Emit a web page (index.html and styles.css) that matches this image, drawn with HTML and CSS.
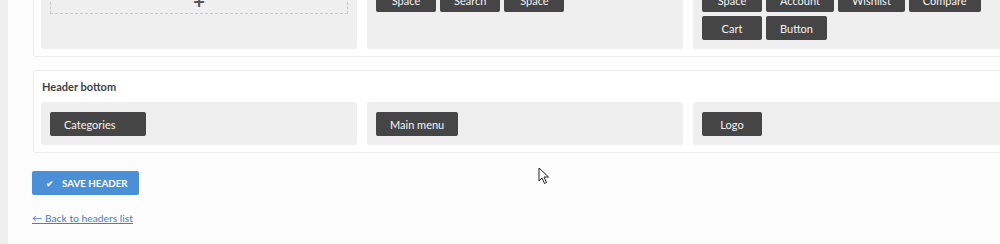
FILE: index.html
```html
<!DOCTYPE html>
<html lang="en">
<head>
    <meta charset="UTF-8">
    <meta name="viewport" content="width=device-width, initial-scale=1.0">
    <title>Header builder</title>
    <link rel="stylesheet" href="styles.css">
</head>
<body>
    <div class="sidebar"></div>
    <div class="content">
        <div class="builder">
            <div class="section section-top">
                <div class="section-title">Header main</div>
                <div class="columns">
                    <div class="column">
                        <div class="dropzone"><span class="plus">+</span></div>
                    </div>
                    <div class="column">
                        <div class="row">
                            <span class="element">Space</span>
                            <span class="element">Search</span>
                            <span class="element">Space</span>
                        </div>
                    </div>
                    <div class="column">
                        <div class="row">
                            <span class="element">Space</span>
                            <span class="element">Account</span>
                            <span class="element">Wishlist</span>
                            <span class="element">Compare</span>
                        </div>
                        <div class="row">
                            <span class="element">Cart</span>
                            <span class="element">Button</span>
                        </div>
                    </div>
                </div>
            </div>

            <div class="section">
                <div class="section-title">Header bottom</div>
                <div class="columns">
                    <div class="column">
                        <div class="row">
                            <span class="element element-wide">Categories</span>
                        </div>
                    </div>
                    <div class="column">
                        <div class="row">
                            <span class="element">Main menu</span>
                        </div>
                    </div>
                    <div class="column">
                        <div class="row">
                            <span class="element">Logo</span>
                        </div>
                    </div>
                </div>
            </div>
        </div>

        <button type="button" class="save-btn"><span class="check">&#10004;</span>Save header</button>
        <a href="#" class="back-link">&larr; Back to headers list</a>
    </div>

    <svg class="cursor" width="12" height="18" viewBox="0 0 12 18">
        <path d="M1 1 L1 14 L4 11 L6.5 16.5 L8.5 15.5 L6 10 L10.5 10 Z" fill="#fff" stroke="#222" stroke-width="1"/>
    </svg>
</body>
</html>
```

FILE: styles.css
```css
body {
    margin: 0;
    height: 244px;
    overflow: hidden;
    display: flex;
    background: #fcfcfd;
    font-family: Lato, "Open Sans", sans-serif;
    font-size: 11px;
    color: #3c3c3c;
}
.sidebar {
    width: 8px;
    flex-shrink: 0;
    background: #efeff0;
}
.content {
    padding-left: 24px;
    min-width: 1000px;
}
.builder {
    display: flex;
    flex-direction: column;
    gap: 13px;
    margin-top: -54px;
    margin-left: 1px;
}
.section {
    width: 984px;
    box-sizing: border-box;
    background: #fff;
    border: 1px solid #ececee;
    border-radius: 3px;
    padding: 7px 7px 7px;
}
.section-title {
    height: 24px;
    line-height: 18px;
    padding-left: 1px;
    font-weight: bold;
    color: #3f3f46;
}
.columns {
    display: grid;
    grid-template-columns: repeat(3, 316px);
    gap: 10px;
    align-items: stretch;
}
.column {
    background: #efefef;
    border-radius: 3px;
    padding: 10px 9px 9px;
    display: flex;
    flex-direction: column;
    gap: 4px;
}
.row {
    display: flex;
    gap: 4px;
}
.element {
    min-width: 60px;
    height: 24px;
    box-sizing: border-box;
    padding: 0 14px;
    background: #464546;
    color: #f4f4f4;
    border-radius: 2px;
    display: flex;
    align-items: center;
    justify-content: center;
}
.element-wide {
    justify-content: flex-start;
    width: 96px;
}
.dropzone {
    height: 24px;
    border: 1px dashed #c9c9c9;
    display: flex;
    align-items: center;
    justify-content: center;
}
.plus {
    font-size: 20px;
    font-weight: bold;
    color: #555;
    line-height: 16px;
}
.save-btn {
    display: flex;
    align-items: center;
    gap: 8px;
    margin-top: 18px;
    height: 24px;
    width: 107px;
    padding: 0 0 0 14px;
    background: #4b8fd7;
    color: #fff;
    border: none;
    border-radius: 2px;
    font-family: inherit;
    font-size: 9.8px;
    font-weight: bold;
    text-transform: uppercase;
    cursor: pointer;
}
.check {
    font-size: 9px;
    color: #e8f0fa;
}
.back-link {
    display: inline-block;
    margin-top: 17px;
    color: #4a7ec2;
    font-size: 10.3px;
}
.cursor {
    position: absolute;
    left: 538px;
    top: 167px;
}
```
